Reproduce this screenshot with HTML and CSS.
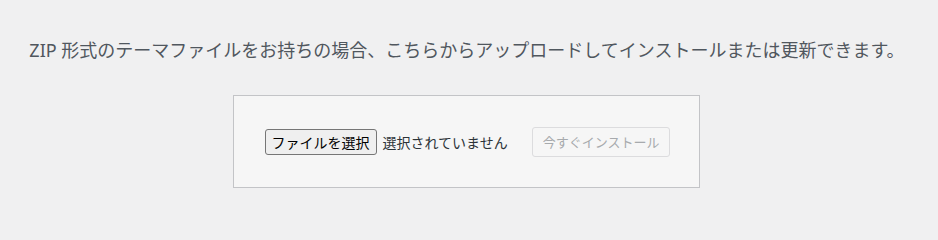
FILE: index.html
```html
<!DOCTYPE html>
<html lang="ja">
<head>
<meta charset="utf-8">
<title>テーマのアップロード</title>
<link rel="stylesheet" href="styles.css">
</head>
<body>
<div class="upload-theme">
  <p class="install-help">ZIP 形式のテーマファイルをお持ちの場合、こちらからアップロードしてインストールまたは更新できます。</p>
  <div class="form-row">
    <form class="upload-form">
      <div class="file-field">
        <button type="button" class="file-btn">ファイルを選択</button>
        <span class="file-name">選択されていません</span>
      </div>
      <button type="button" class="install-btn" disabled>今すぐインストール</button>
    </form>
  </div>
</div>
</body>
</html>
```

FILE: styles.css
```css
html, body {
  margin: 0;
  padding: 0;
  background: #f0f0f1;
}

body {
  font-family: "Noto Sans", "Noto Sans CJK JP", sans-serif;
  color: #3c434a;
}

.upload-theme {
  display: flex;
  flex-direction: column;
}

.install-help {
  margin: 0;
  padding: 37px 4px 0 0;
  font-size: 18px;
  line-height: 27px;
  color: #50575e;
  text-align: center;
}

.form-row {
  display: flex;
  justify-content: center;
  padding: 31px 5px 0 0;
}

.upload-form {
  display: flex;
  align-items: center;
  gap: 24px;
  margin: 0;
  padding: 31px 29px 30px 31px;
  border: 1px solid #c3c4c7;
  background: #f6f6f6;
  height: 30px;
}

.file-field {
  display: flex;
  align-items: center;
  gap: 6px;
}

.file-btn {
  font-family: "Noto Sans CJK JP", sans-serif;
  font-size: 14px;
  line-height: 20px;
  height: 26px;
  padding: 0 6px;
  color: #000;
  background: #efefef;
  border: 1px solid #767676;
  border-radius: 3px;
  margin: 0;
}

.file-name {
  font-family: "Noto Sans CJK JP", sans-serif;
  font-size: 14px;
  line-height: 20px;
  color: #2c3338;
}

.install-btn {
  font-family: "Noto Sans CJK JP", sans-serif;
  font-size: 13px;
  line-height: 20px;
  height: 30px;
  padding: 0 10px;
  margin: 0;
  color: #a7aaad;
  background: #f6f6f6;
  border: 1px solid #dcdcde;
  border-radius: 3px;
}
```
